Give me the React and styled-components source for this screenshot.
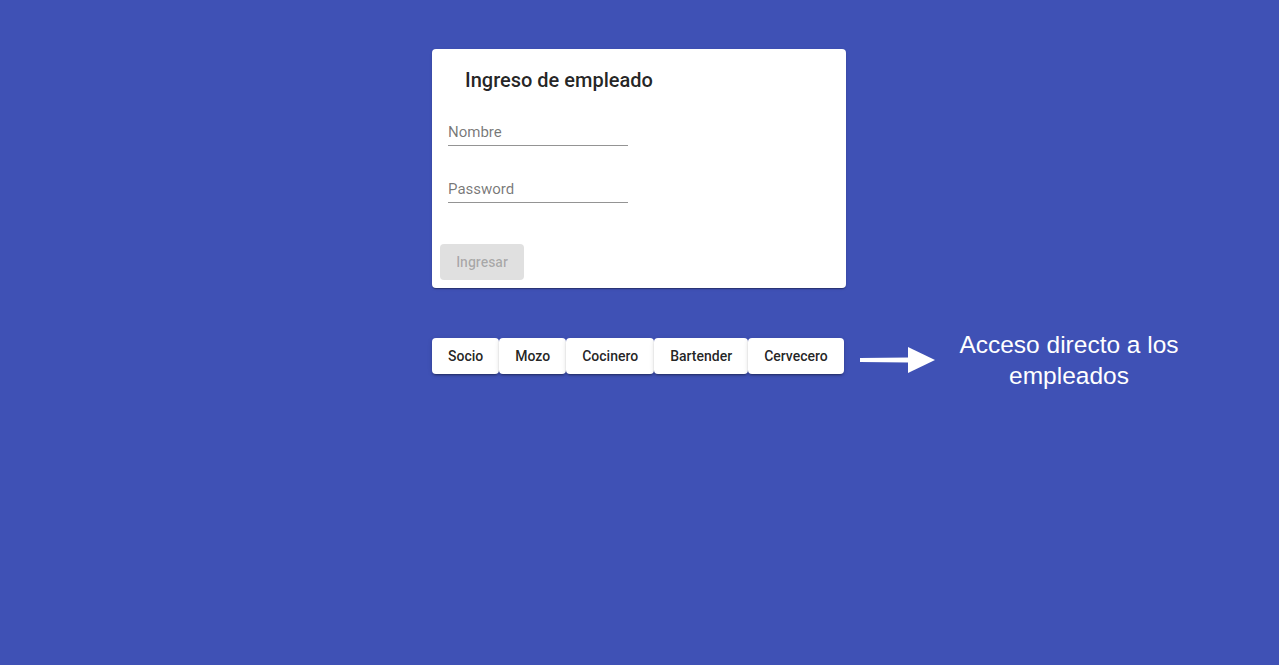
import React from "react";
import styled, { createGlobalStyle } from "styled-components";

const Global = createGlobalStyle`
  html, body { margin: 0; padding: 0; height: 100%; }
  body {
    background: #3f51b5;
    font-family: Roboto, "Liberation Sans", Arial, sans-serif;
  }
  #root { min-height: 100%; }
`;

const Page = styled.div`
  display: grid;
  grid-template-columns: 1fr 414px 1fr;
  grid-template-rows: auto auto;
  row-gap: 50px;
  padding: 49px 1px 0 0;
  box-sizing: border-box;
  min-height: 665px;
  align-content: start;
`;

const Card = styled.div`
  grid-column: 2;
  grid-row: 1;
  background: #fff;
  border-radius: 4px;
  box-shadow: 0 2px 1px -1px rgba(0,0,0,0.2), 0 1px 1px 0 rgba(0,0,0,0.14), 0 1px 3px 0 rgba(0,0,0,0.12);
  display: flex;
  flex-direction: column;
`;

const Title = styled.h2`
  margin: 15px 0 0 33px;
  font-size: 20px;
  line-height: 32px;
  font-weight: 500;
  color: rgba(0,0,0,0.87);
`;

const Field = styled.div`
  width: 180px;
  margin: ${(p) => p.$top}px 0 0 16px;
  padding-bottom: 3px;
  border-bottom: 1px solid rgba(0,0,0,0.42);
  font-size: 15px;
  line-height: 20px;
  color: rgba(0,0,0,0.54);
`;

const Actions = styled.div`
  display: flex;
  padding: 8px;
  margin-top: 33px;
`;

const DisabledButton = styled.button`
  width: 84px;
  height: 36px;
  border: none;
  border-radius: 4px;
  background: #e0e0e0;
  color: rgba(0,0,0,0.26);
  font-family: Roboto, sans-serif;
  font-size: 14px;
  font-weight: 500;
  padding: 0 16px;
`;

const ButtonRow = styled.div`
  grid-column: 2;
  grid-row: 2;
  display: flex;
  gap: 0;
  align-self: start;
`;

const RoleButton = styled.button`
  height: 36px;
  padding: 0 16px;
  border: none;
  border-radius: 4px;
  background: #fff;
  color: rgba(0,0,0,0.87);
  font-family: Roboto, sans-serif;
  font-size: 14px;
  font-weight: 500;
  box-shadow: 0 3px 1px -2px rgba(0,0,0,0.2), 0 2px 2px 0 rgba(0,0,0,0.14), 0 1px 5px 0 rgba(0,0,0,0.12);
  cursor: pointer;
`;

const Annotation = styled.div`
  grid-column: 3;
  grid-row: 2;
  display: flex;
  align-items: flex-start;
  padding-left: 14px;
`;

const ArrowIcon = styled.svg`
  margin-top: 9px;
  flex: none;
`;

const Note = styled.div`
  width: 250px;
  margin-left: 9px;
  margin-top: -9px;
  font-family: "Liberation Sans", Arial, sans-serif;
  font-size: 24.5px;
  line-height: 31px;
  color: #fff;
  text-align: center;
`;

const roles = ["Socio", "Mozo", "Cocinero", "Bartender", "Cervecero"];

export default function App() {
  return (
    <>
      <Global />
      <Page>
        <Card>
          <Title>Ingreso de empleado</Title>
          <Field $top={26}>Nombre</Field>
          <Field $top={33}>Password</Field>
          <Actions>
            <DisabledButton disabled>Ingresar</DisabledButton>
          </Actions>
        </Card>
        <ButtonRow>
          {roles.map((r) => (
            <RoleButton key={r}>{r}</RoleButton>
          ))}
        </ButtonRow>
        <Annotation>
          <ArrowIcon width="75" height="26" viewBox="0 0 75 26">
            <path d="M0 11 L49 10.5 L49 15.5 L0 15 Z" fill="#fff" />
            <polygon points="48,0 75,13 48,26" fill="#fff" />
          </ArrowIcon>
          <Note>Acceso directo a los empleados</Note>
        </Annotation>
      </Page>
    </>
  );
}
